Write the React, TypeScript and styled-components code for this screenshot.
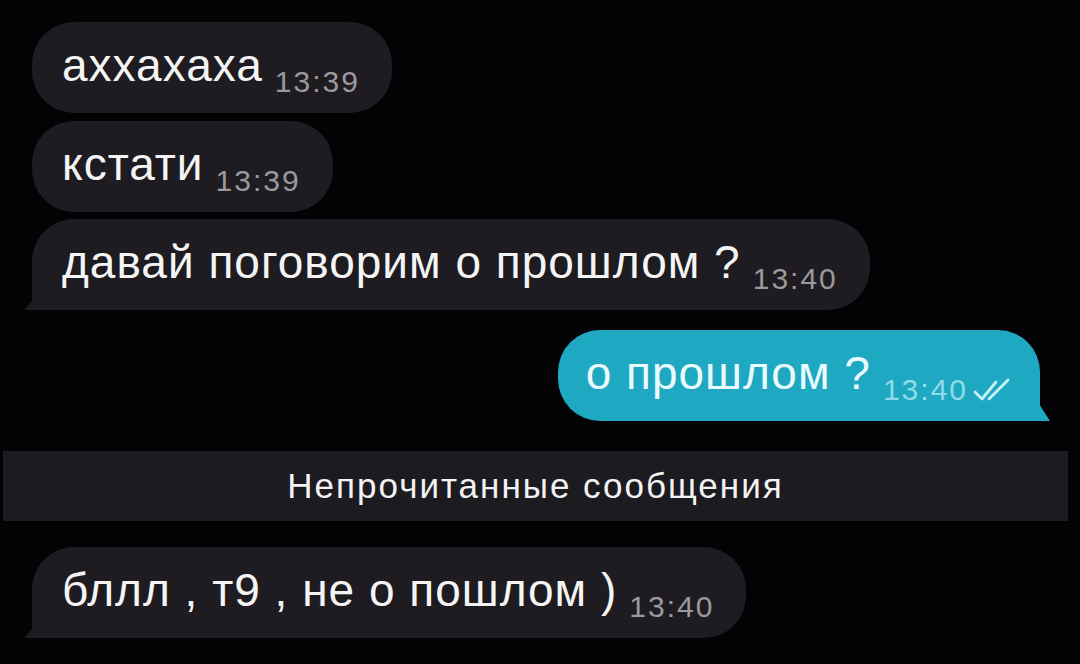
import React from "react";
import styled, { createGlobalStyle, css } from "styled-components";

const Global = createGlobalStyle`
  html, body {
    margin: 0;
    padding: 0;
    background: #000;
  }
  body {
    width: 1080px;
    height: 664px;
    overflow: hidden;
    font-family: "Liberation Sans", Arial, "Noto Sans", sans-serif;
  }
`;

const Screen = styled.div`
  width: 1080px;
  height: 664px;
  background: #030204;
  display: flex;
  flex-direction: column;
  padding-top: 22px;
  box-sizing: border-box;
`;

const Row = styled.div<{ $out?: boolean; $gap?: number }>`
  display: flex;
  justify-content: ${(p) => (p.$out ? "flex-end" : "flex-start")};
  padding: ${(p) => (p.$out ? "0 40px 0 0" : "0 0 0 32px")};
  margin-top: ${(p) => p.$gap ?? 0}px;
`;

const Bubble = styled.div<{ $out?: boolean; $tail?: boolean }>`
  position: relative;
  height: 91px;
  box-sizing: border-box;
  display: flex;
  align-items: center;
  padding: 0 ${(p) => (p.$out ? 28 : 32)}px 0 ${(p) => (p.$out ? 28 : 30)}px;
  border-radius: 42px;
  background: ${(p) => (p.$out ? "#1ea8c1" : "#1e1c21")};
  color: ${(p) => (p.$out ? "#e9fbff" : "#f4f4f4")};

  ${(p) =>
    p.$tail &&
    !p.$out &&
    css`
      border-bottom-left-radius: 10px;
      &::before {
        content: "";
        position: absolute;
        left: -8px;
        bottom: 0;
        width: 20px;
        height: 22px;
        background: #1e1c21;
        clip-path: polygon(100% 0, 100% 100%, 0 100%);
      }
    `}

  ${(p) =>
    p.$tail &&
    p.$out &&
    css`
      border-bottom-right-radius: 14px;
      &::after {
        content: "";
        position: absolute;
        right: -10px;
        bottom: 0;
        width: 24px;
        height: 26px;
        background: #1ea8c1;
        clip-path: polygon(0 0, 30% 0, 100% 100%, 0 100%);
      }
    `}
`;

const Text = styled.span`
  font-size: 46px;
  letter-spacing: 1px;
  line-height: 1;
  margin-top: -6px;
`;

const Time = styled.span<{ $out?: boolean }>`
  font-size: 30px;
  letter-spacing: 2px;
  line-height: 1;
  margin-left: 12px;
  margin-top: 28px;
  color: ${(p) => (p.$out ? "#8fdbe8" : "#9a999e")};
  display: flex;
  align-items: center;
  gap: 4px;
`;

const Divider = styled.div`
  margin: 30px 12px 0 3px;
  height: 70px;
  background: #1c1b20;
  display: flex;
  align-items: center;
  justify-content: center;
  color: #f2f2f2;
  font-size: 35px;
  letter-spacing: 2px;
`;

const Checks = () => (
  <svg width="40" height="26" viewBox="0 0 40 26" fill="none">
    <path d="M3 15 L10 22 L24 5" stroke="#c8f2f8" strokeWidth="2.8" strokeLinecap="round" strokeLinejoin="round" />
    <path d="M17 22 L36 3" stroke="#c8f2f8" strokeWidth="2.8" strokeLinecap="round" />
  </svg>
);

type Msg = { text: string; time: string; out?: boolean; tail?: boolean; gap?: number };

const before: Msg[] = [
  { text: "аххахаха", time: "13:39" },
  { text: "кстати", time: "13:39", gap: 8 },
  { text: "давай поговорим о прошлом ?", time: "13:40", gap: 7, tail: true },
  { text: "о прошлом ?", time: "13:40", out: true, tail: true, gap: 20 },
];

const Message = ({ m }: { m: Msg }) => (
  <Row $out={m.out} $gap={m.gap}>
    <Bubble $out={m.out} $tail={m.tail}>
      <Text>{m.text}</Text>
      <Time $out={m.out}>
        {m.time}
        {m.out && <Checks />}
      </Time>
    </Bubble>
  </Row>
);

export default function App() {
  return (
    <>
      <Global />
      <Screen>
        {before.map((m, i) => (
          <Message key={i} m={m} />
        ))}
        <Divider>Непрочитанные сообщения</Divider>
        <Message m={{ text: "бллл , т9 , не о пошлом )", time: "13:40", tail: true, gap: 26 }} />
      </Screen>
    </>
  );
}
